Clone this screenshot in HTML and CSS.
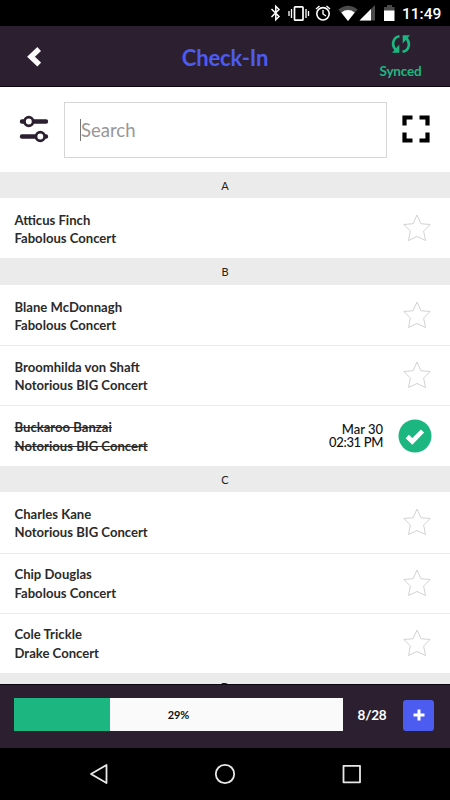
FILE: index.html
```html
<!DOCTYPE html>
<html lang="en">
<head>
<meta charset="utf-8">
<title>Check-In</title>
<link rel="stylesheet" href="styles.css">
</head>
<body>
<svg class="defs" width="0" height="0">
  <symbol id="star" viewBox="0 0 28 28"><path d="M14 1l3.900 8.700 9.300.8-6.600 6.500 1.900 9.500-8.500-4-8.500 4 1.900-9.500L.8 10.500l9.300-.8z" fill="none" stroke="#cdcdcd" stroke-width=".9"/></symbol>
</svg>
<div class="status">
  <svg class="status-icons" width="130" height="26" viewBox="0 0 130 26" fill="none" stroke="#fff">
    <path d="M1.500 9l7.500 7.500-3.200 3.200V6.300L9 9.500 1.500 17" stroke-width="1.500"/>
    <rect x="24.500" y="6.800" width="8.500" height="13.400" rx=".8" stroke-width="1.700"/>
    <path d="M21.500 9v9M36 9v9M19 11v5M38.500 11v5" stroke-width="1.300"/>
    <circle cx="53" cy="13.800" r="6.200" stroke-width="1.600"/>
    <path d="M53 10v4l3 2M46 9l3.500-3M60 9l-3.500-3" stroke-width="1.400"/>
    <g stroke="none">
      <path d="M68.500 9.500Q78 2 87.500 9.500L78 21z" fill="#4b4b4b"/>
      <path d="M71.300 12.400Q78 7.500 84.700 12.400L78 21z" fill="#fff"/>
      <path d="M105 5v15.500H89.500z" fill="#4b4b4b"/>
      <path d="M101 9v11.500H89.500z" fill="#fff"/>
      <path d="M117 5h5v2h2.500v4h-10.500V7h3z" fill="#4b4b4b"/>
      <path d="M114 10.500h10.500V21H114z" fill="#fff"/>
    </g>
  </svg>
  <span class="clock">11:49</span>
</div>
<header class="header">
  <div class="back"><svg width="16" height="20" viewBox="0 0 16 20"><path d="M14.200 2L6 9.800l8.200 7.800" fill="none" stroke="#fafafa" stroke-width="5.400"/></svg></div>
  <h1 class="title">Check-In</h1>
  <div class="sync">
    <svg width="20" height="20" viewBox="0 0 20 20" fill="none" stroke="#1cb680" stroke-width="2.600"><path d="M8.500 2.200C1.200 3.500.3 12 5.200 16M11.500 17.800c7.300-1.300 8.200-9.800 3.300-13.800"/><path d="M8.300 10.500v8.300H1zM11.700 9.500V1.200H19z" fill="#1cb680" stroke="none"/></svg>
    <span>Synced</span>
  </div>
</header>
<div class="search">
  <svg class="filters" width="30" height="28" viewBox="0 0 30 28" fill="#fff" stroke="#2c1f30"><path d="M3 6.500h24M3 21.500h24" stroke-width="4.400" stroke-linecap="round"/><circle cx="9.800" cy="6.500" r="4.300" stroke-width="2.700"/><circle cx="21.300" cy="21.500" r="4.300" stroke-width="2.700"/></svg>
  <div class="field"><span>Search</span></div>
  <svg class="scan" width="28" height="28" viewBox="0 0 28 28"><path d="M2.500 10.500v-8h8M17.500 2.500h8v8M25.500 17.500v8h-8M10.500 25.500h-8v-8" fill="none" stroke="#000" stroke-width="4.200"/></svg>
</div>
<main class="list">
  <div class="section">A</div>
  <div class="row"><div class="who">Atticus Finch<br>Fabolous Concert</div><svg class="star"><use href="#star"/></svg></div>
  <div class="section">B</div>
  <div class="row"><div class="who">Blane McDonnagh<br>Fabolous Concert</div><svg class="star"><use href="#star"/></svg></div>
  <div class="row"><div class="who">Broomhilda von Shaft<br>Notorious BIG Concert</div><svg class="star"><use href="#star"/></svg></div>
  <div class="row"><div class="who done">Buckaroo Banzai<br>Notorious BIG Concert</div><div class="when">Mar 30<br><span class="time">02:31 PM</span></div><svg class="check" width="34" height="34" viewBox="0 0 34 34"><circle cx="17" cy="17" r="16.500" fill="#1cb680"/><path d="M9.300 17.500l5 4.900L24.500 12" fill="none" stroke="#fff" stroke-width="4.600"/></svg></div>
  <div class="section">C</div>
  <div class="row"><div class="who">Charles Kane<br>Notorious BIG Concert</div><svg class="star"><use href="#star"/></svg></div>
  <div class="row"><div class="who">Chip Douglas<br>Fabolous Concert</div><svg class="star"><use href="#star"/></svg></div>
  <div class="row"><div class="who">Cole Trickle<br>Drake Concert</div><svg class="star"><use href="#star"/></svg></div>
  <div class="section">D</div>
</main>
<footer class="footer">
  <div class="progress"><span class="percent">29%</span></div>
  <span class="count">8/28</span>
  <div class="add"><svg width="12" height="12" viewBox="0 0 12 12"><path d="M6 .5v11M.5 6h11" stroke="#fff" stroke-width="3"/></svg></div>
</footer>
<nav class="nav">
  <svg width="450" height="52" viewBox="0 0 450 52" fill="none" stroke="#e8e8e8" stroke-width="1.800" stroke-linejoin="round"><path d="M106.500 17v18L91 26z"/><circle cx="225" cy="26" r="9.200"/><rect x="343.500" y="17.800" width="16.500" height="16.500"/></svg>
</nav>
</body>
</html>
```
FILE: styles.css
```css
* { box-sizing: border-box; }
body { margin: 0; width: 450px; height: 800px; overflow: hidden; display: flex; flex-direction: column; background: #fff; font-family: Lato, "Liberation Sans", sans-serif; }
svg { display: block; flex: none; }
.defs { position: absolute; }
.status { height: 26px; flex: none; background: #000; display: flex; justify-content: flex-end; align-items: center; padding-right: 9px; color: #fff; }
.status-icons { margin-right: 2px; }
.clock { font: 500 15.5px/26px Roboto, sans-serif; width: 39px; white-space: nowrap; padding-top: 1px; }
.header { height: 61px; flex: none; background: #2c1f30; border-bottom: 1.500px solid #0d080f; display: grid; grid-template-columns: 100px 1fr 100px; align-items: center; }
.back { padding: 2px 0 0 25px; }
.title { margin: 3px 0 0; text-align: center; color: #4c5bf0; font-size: 22px; line-height: 28px; font-weight: 700; letter-spacing: -.15px; }
.sync { display: flex; flex-direction: column; align-items: center; color: #1cb680; font-size: 13.500px; line-height: 18px; font-weight: 700; letter-spacing: -.2px; gap: 8px; padding: 1px 0 0 1px; }
.search { height: 84.500px; flex: none; display: flex; align-items: center; padding: 0 20px 0 19px; }
.field { width: 323px; height: 56px; margin: 1px 15px 0; border: 1px solid #d6d6d6; display: flex; align-items: center; padding-left: 15px; font-size: 18.500px; color: #979797; }
.field span { border-left: 1px solid #777; line-height: 22px; }
.list { height: 512.500px; flex: none; overflow: hidden; }
.section { height: 26.700px; background: #ebebeb; text-align: center; color: #222; font-size: 11px; line-height: 27px; }
.row { height: 60.200px; display: flex; align-items: center; padding: 1px 18px 0 14.500px; }
.row + .row { border-top: 1px solid #e9e9e9; padding-top: 0; }
.who { flex: 1; color: #2b2b2b; font-size: 13.100px; line-height: 18.400px; font-weight: 700; padding-top: 1px; }
.done { text-decoration: line-through; }
.star { width: 28px; height: 28px; margin: 0 1px 1px 0; }
.check { margin-bottom: 1px; }
.when { text-align: right; color: #111; font-size: 13px; line-height: 13.500px; font-weight: 500; margin-right: 15px; }
.time { letter-spacing: -.35px; }
.footer { height: 64px; flex: none; background: #2c1f30; border-top: 1px solid #0d080f; display: flex; align-items: center; padding: 0 16px 3px 14px; }
.progress { width: 329px; height: 33px; margin-bottom: 1px; display: flex; align-items: center; justify-content: center; background: linear-gradient(90deg, #1cb680 96px, #fafafa 96px); }
.percent { font-size: 11px; font-weight: 700; color: #111; letter-spacing: -.15px; }
.count { flex: 1; text-align: center; color: #fff; font-size: 13.500px; font-weight: 700; letter-spacing: -.2px; padding-right: 2px; }
.add { width: 31px; height: 31px; border-radius: 3px; background: #4c5bf0; display: flex; align-items: center; justify-content: center; }
.nav { flex: 1; background: #000; }
```
